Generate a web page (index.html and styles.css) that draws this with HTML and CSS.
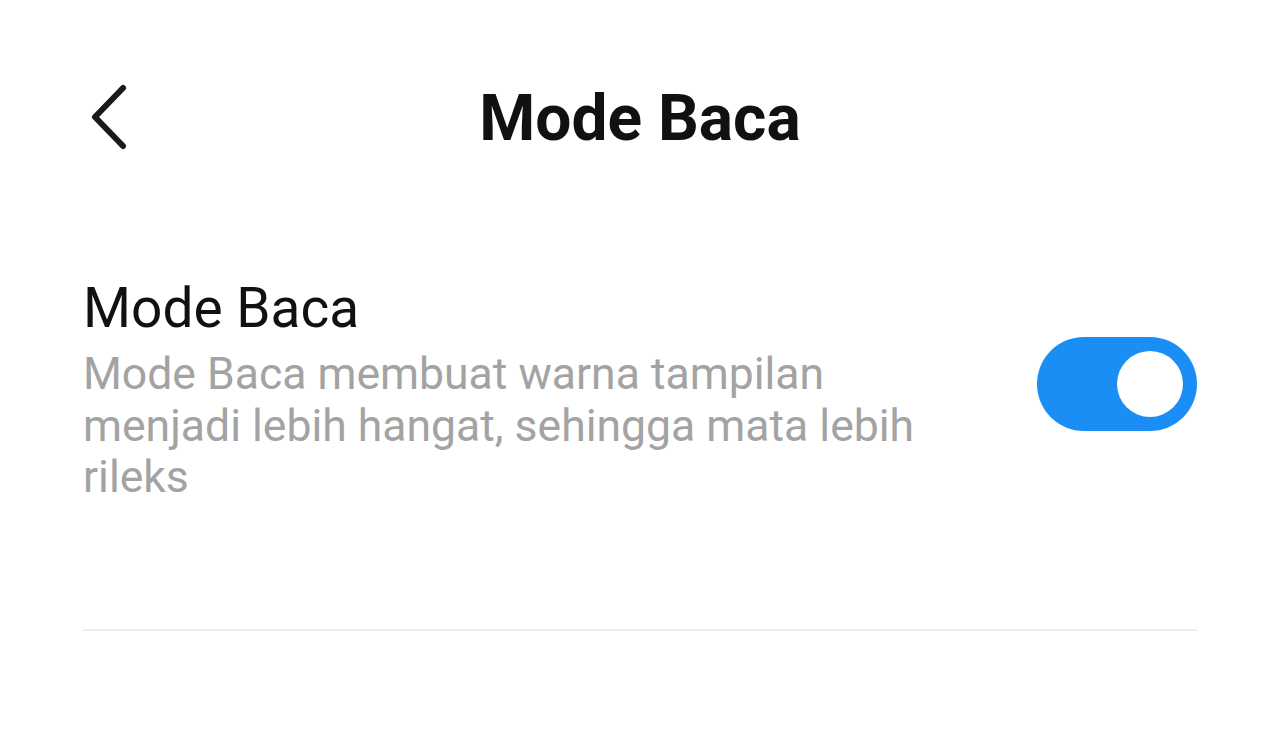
FILE: index.html
```html
<!DOCTYPE html>
<html lang="id">
<head>
    <meta charset="UTF-8">
    <meta name="viewport" content="width=device-width, initial-scale=1.0">
    <title>Mode Baca</title>
    <link rel="stylesheet" href="styles.css">
</head>
<body>
    <div class="screen">
        <div class="header">
            <button class="back" aria-label="Kembali">
                <svg width="40" height="66" viewBox="0 0 40 66">
                    <polyline points="34,4 6,33 34,62" fill="none" stroke="#1a1a1a" stroke-width="6" stroke-linecap="round" stroke-linejoin="round"/>
                </svg>
            </button>
            <h1>Mode Baca</h1>
        </div>

        <div class="setting">
            <div class="setting-text">
                <div class="setting-title">Mode Baca</div>
                <div class="setting-desc">Mode Baca membuat warna tampilan menjadi lebih hangat, sehingga mata lebih rileks</div>
            </div>
            <div class="switch on">
                <div class="knob"></div>
            </div>
        </div>

        <div class="divider"></div>
    </div>
</body>
</html>
```

FILE: styles.css
```css
body {
    margin: 0;
    padding: 0;
    background: #fff;
    font-family: Roboto, "Liberation Sans", sans-serif;
    height: 729px;
    overflow: hidden;
}
.screen {
    padding: 0 83px;
}
.header {
    position: relative;
    height: 236px;
    display: flex;
    align-items: center;
    justify-content: center;
}
.back {
    position: absolute;
    left: 6px;
    top: 84px;
    padding: 0;
    border: none;
    background: none;
    cursor: pointer;
}
h1 {
    margin: 0;
    font-size: 64px;
    font-weight: 700;
    color: #111;
}
.setting {
    display: flex;
    align-items: center;
    justify-content: space-between;
    padding: 37px 0 0;
}
.setting-text {
    max-width: 860px;
}
.setting-title {
    font-size: 55px;
    line-height: 70px;
    margin-bottom: 6px;
    color: #111;
}
.setting-desc {
    font-size: 44.5px;
    line-height: 51.5px;
    color: #a3a3a3;
}
.switch {
    width: 160px;
    height: 94px;
    margin-bottom: 8px;
    border-radius: 47px;
    background: #ddd;
    display: flex;
    align-items: center;
    padding: 0 14px;
    box-sizing: border-box;
}
.switch.on {
    background: #1a8ef5;
    justify-content: flex-end;
}
.knob {
    width: 66px;
    height: 66px;
    border-radius: 50%;
    background: #fff;
}
.divider {
    margin-top: 125px;
    height: 2px;
    background: #ececec;
}
```
